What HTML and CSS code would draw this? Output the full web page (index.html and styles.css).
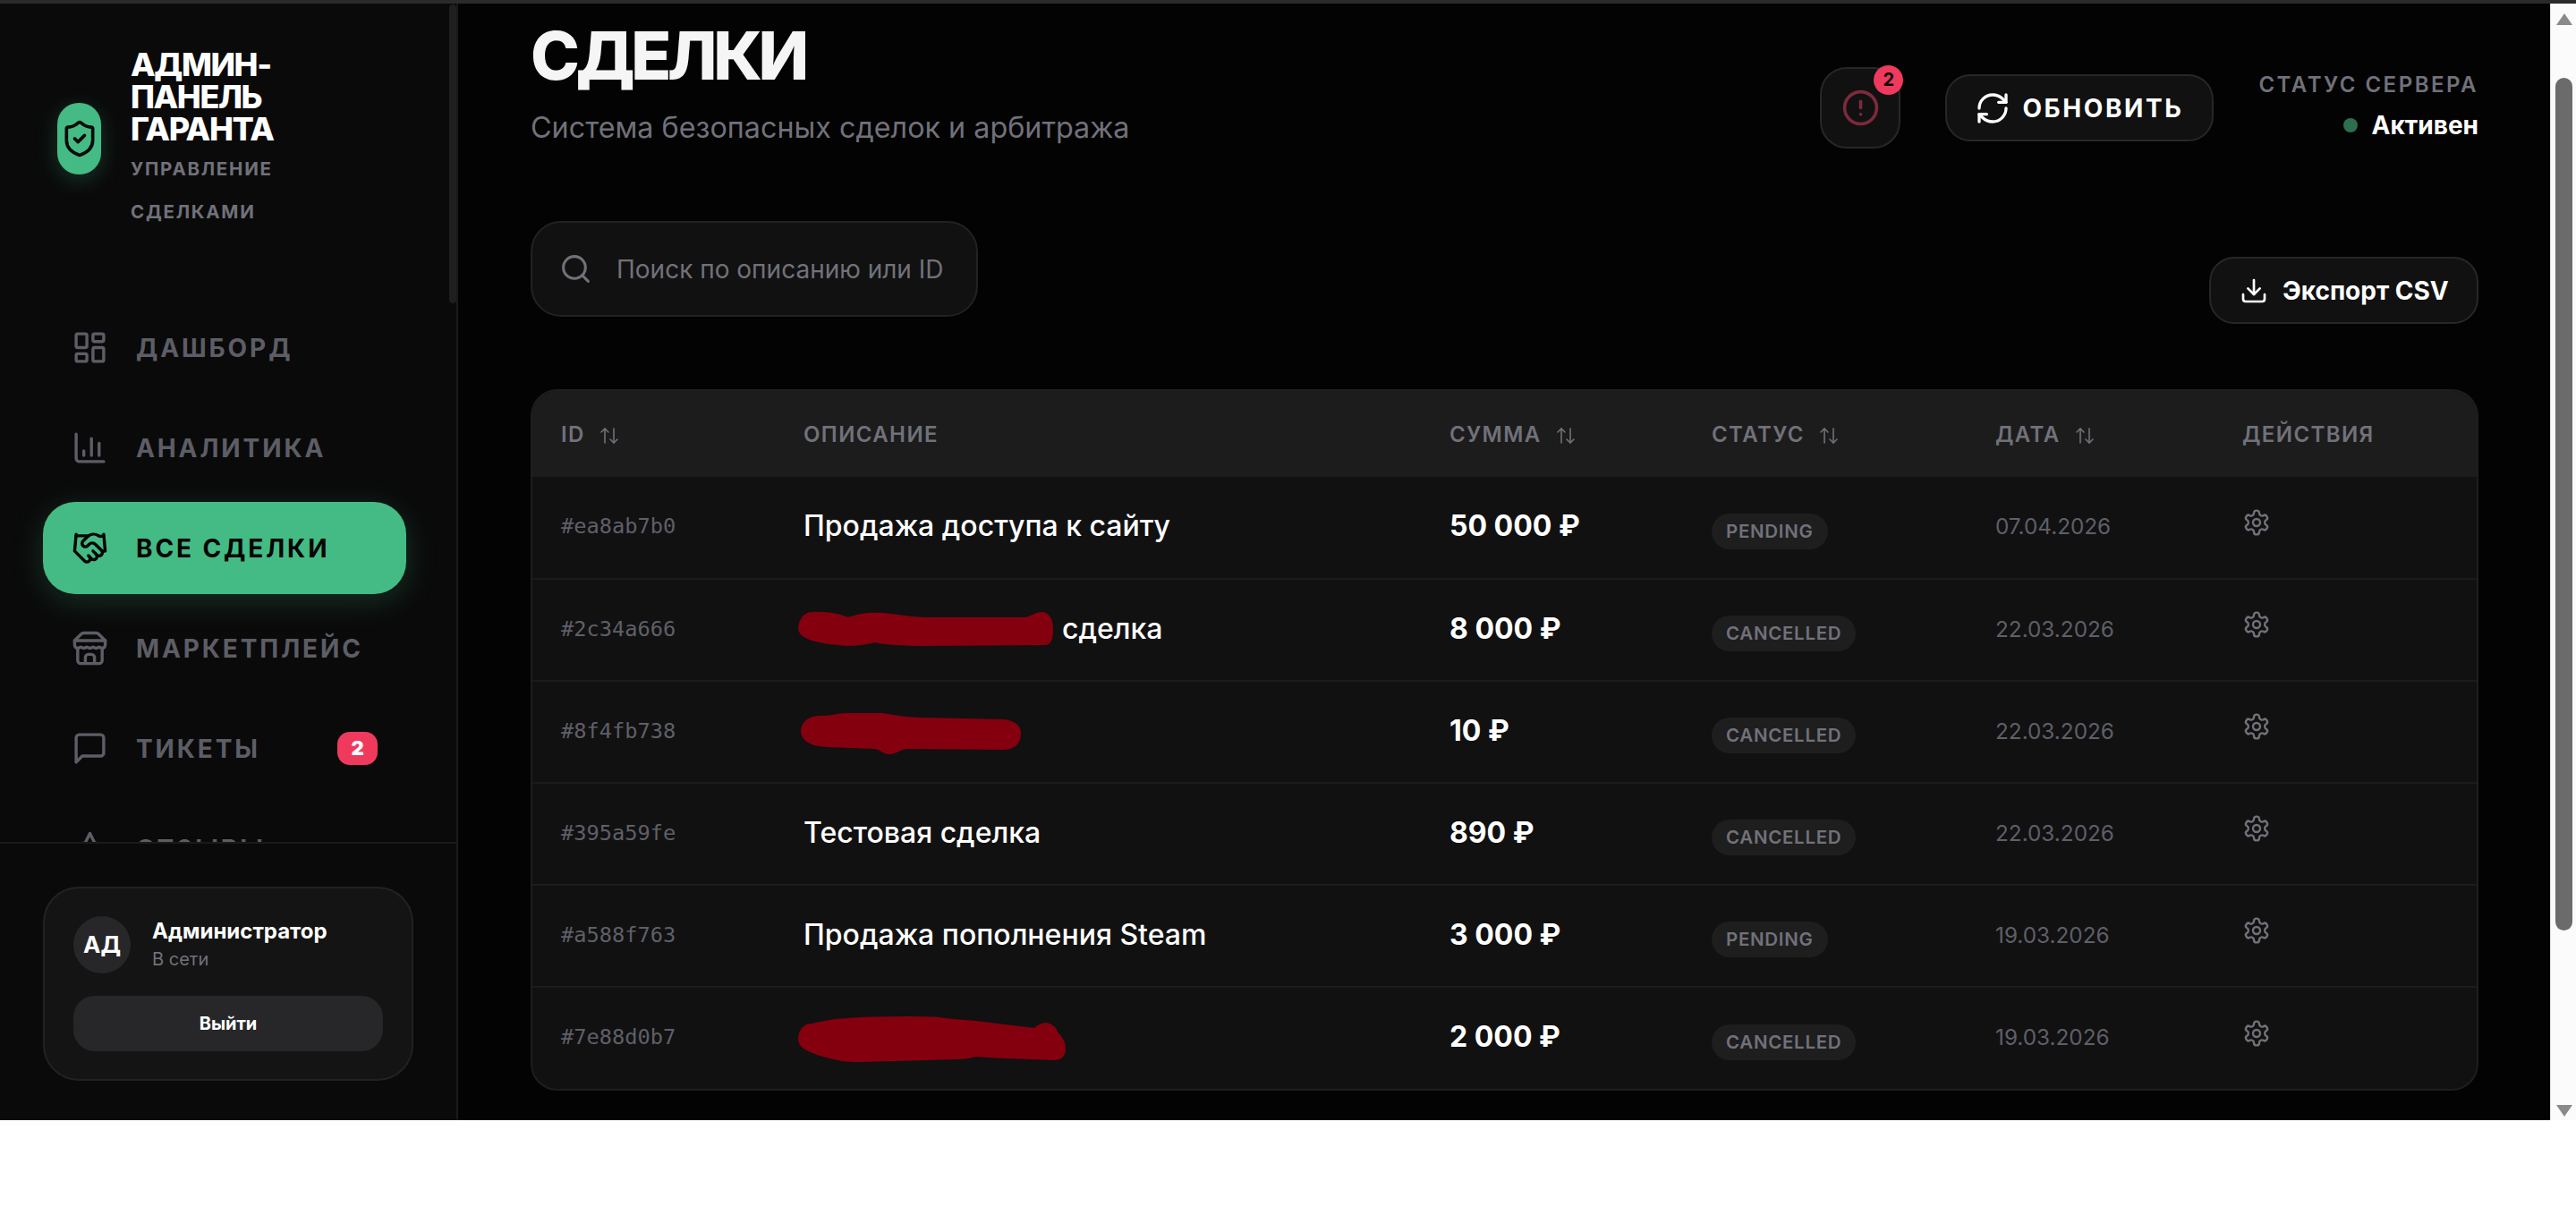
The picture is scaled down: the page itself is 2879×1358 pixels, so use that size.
FILE: index.html
```html
<!DOCTYPE html>
<html lang="ru">
<head>
  <meta charset="UTF-8">
  <title>Админ-панель гаранта</title>
  <link rel="stylesheet" href="styles.css">
</head>
<body>
  <svg class="defs" width="0" height="0">
    <symbol id="i-sort" viewBox="0 0 24 24"><path d="m21 16-4 4-4-4"/><path d="M17 20V4"/><path d="m3 8 4-4 4 4"/><path d="M7 4v16"/></symbol>
    <symbol id="i-gear" viewBox="0 0 24 24"><path d="M12.22 2h-.44a2 2 0 0 0-2 2v.18a2 2 0 0 1-1 1.73l-.43.25a2 2 0 0 1-2 0l-.15-.08a2 2 0 0 0-2.73.73l-.22.38a2 2 0 0 0 .73 2.73l.15.1a2 2 0 0 1 1 1.72v.51a2 2 0 0 1-1 1.74l-.15.09a2 2 0 0 0-.73 2.73l.22.38a2 2 0 0 0 2.73.73l.15-.08a2 2 0 0 1 2 0l.43.25a2 2 0 0 1 1 1.73V20a2 2 0 0 0 2 2h.44a2 2 0 0 0 2-2v-.18a2 2 0 0 1 1-1.73l.43-.25a2 2 0 0 1 2 0l.15.08a2 2 0 0 0 2.73-.73l.22-.39a2 2 0 0 0-.73-2.73l-.15-.08a2 2 0 0 1-1-1.74v-.5a2 2 0 0 1 1-1.74l.15-.09a2 2 0 0 0 .73-2.73l-.22-.38a2 2 0 0 0-2.73-.73l-.15.08a2 2 0 0 1-2 0l-.43-.25a2 2 0 0 1-1-1.73V4a2 2 0 0 0-2-2z"/><circle cx="12" cy="12" r="3"/></symbol>
  </svg>

  <div class="top-strip"></div>
  <div class="window">
    <aside class="sidebar">
      <div class="side-thumb"></div>
      <div class="brand">
        <div class="brand-icon">
          <svg class="icon" viewBox="0 0 24 24"><path d="M20 13c0 5-3.5 7.5-7.66 8.95a1 1 0 0 1-.67-.01C7.5 20.5 4 18 4 13V6a1 1 0 0 1 1-1c2 0 4.5-1.2 6.24-2.72a1.17 1.17 0 0 1 1.52 0C14.51 3.81 17 5 19 5a1 1 0 0 1 1 1z"/><path d="m9 12 2 2 4-4"/></svg>
        </div>
        <div class="brand-text">
          <div class="brand-title">АДМИН-ПАНЕЛЬ ГАРАНТА</div>
          <div class="brand-sub">УПРАВЛЕНИЕ СДЕЛКАМИ</div>
        </div>
      </div>

      <nav class="nav">
        <a class="nav-item">
          <svg class="icon" viewBox="0 0 24 24"><rect x="3" y="3" width="7" height="9" rx="1"/><rect x="14" y="3" width="7" height="5" rx="1"/><rect x="14" y="12" width="7" height="9" rx="1"/><rect x="3" y="16" width="7" height="5" rx="1"/></svg>
          <span>ДАШБОРД</span>
        </a>
        <a class="nav-item">
          <svg class="icon" viewBox="0 0 24 24"><path d="M3 3v16a2 2 0 0 0 2 2h16"/><path d="M18 17V9"/><path d="M13 17V6"/><path d="M8 17v-3"/></svg>
          <span>АНАЛИТИКА</span>
        </a>
        <a class="nav-item active">
          <svg class="icon" viewBox="0 0 24 24"><path d="m11 17 2 2a1 1 0 1 0 3-3"/><path d="m14 14 2.5 2.5a1 1 0 1 0 3-3l-3.88-3.88a3 3 0 0 0-4.24 0l-.88.88a1 1 0 1 1-3-3l2.81-2.81a5.79 5.79 0 0 1 7.06-.87l.47.28a2 2 0 0 0 1.42.25L21 4"/><path d="m21 3 1 11h-2"/><path d="M3 3 2 14l6.5 6.5a1 1 0 1 0 3-3"/><path d="M3 4h8"/></svg>
          <span>ВСЕ СДЕЛКИ</span>
        </a>
        <a class="nav-item">
          <svg class="icon" viewBox="0 0 24 24"><path d="m2 7 4.41-4.41A2 2 0 0 1 7.83 2h8.34a2 2 0 0 1 1.42.59L22 7"/><path d="M4 12v8a2 2 0 0 0 2 2h12a2 2 0 0 0 2-2v-8"/><path d="M15 22v-4a2 2 0 0 0-2-2h-2a2 2 0 0 0-2 2v4"/><path d="M2 7h20"/><path d="M22 7v3a2 2 0 0 1-2 2a2.7 2.7 0 0 1-1.59-.63.7.7 0 0 0-.82 0A2.7 2.7 0 0 1 16 12a2.7 2.7 0 0 1-1.59-.63.7.7 0 0 0-.82 0A2.7 2.7 0 0 1 12 12a2.7 2.7 0 0 1-1.59-.63.7.7 0 0 0-.82 0A2.7 2.7 0 0 1 8 12a2.7 2.7 0 0 1-1.59-.63.7.7 0 0 0-.82 0A2.7 2.7 0 0 1 4 12a2 2 0 0 1-2-2V7"/></svg>
          <span>МАРКЕТПЛЕЙС</span>
        </a>
        <a class="nav-item">
          <svg class="icon" viewBox="0 0 24 24"><path d="M21 15a2 2 0 0 1-2 2H7l-4 4V5a2 2 0 0 1 2-2h14a2 2 0 0 1 2 2z"/></svg>
          <span>ТИКЕТЫ</span>
          <b class="nav-badge">2</b>
        </a>
        <a class="nav-item">
          <svg class="icon" viewBox="0 0 24 24"><polygon points="12 2 15.09 8.26 22 9.27 17 14.14 18.18 21.02 12 17.77 5.82 21.02 7 14.14 2 9.27 8.91 8.26 12 2"/></svg>
          <span>ОТЗЫВЫ</span>
        </a>
      </nav>

      <div class="side-footer">
        <div class="user-card">
          <div class="user-row">
            <div class="avatar">АД</div>
            <div>
              <div class="user-name">Администратор</div>
              <div class="user-state">В сети</div>
            </div>
          </div>
          <button class="logout">Выйти</button>
        </div>
      </div>
    </aside>

    <main class="main">
      <header class="page-head">
        <div>
          <h1 class="page-title">СДЕЛКИ</h1>
          <p class="page-sub">Система безопасных сделок и арбитража</p>
        </div>
        <div class="head-actions">
          <button class="alert-btn">
            <svg class="icon" viewBox="0 0 24 24"><circle cx="12" cy="12" r="10"/><line x1="12" y1="8" x2="12" y2="12"/><line x1="12" y1="16" x2="12.01" y2="16"/></svg>
            <b class="alert-count">2</b>
          </button>
          <button class="btn btn-refresh">
            <svg class="icon" viewBox="0 0 24 24"><path d="M3 12a9 9 0 0 1 9-9 9.75 9.75 0 0 1 6.74 2.74L21 8"/><path d="M21 3v5h-5"/><path d="M21 12a9 9 0 0 1-9 9 9.75 9.75 0 0 1-6.74-2.74L3 16"/><path d="M8 16H3v5"/></svg>
            ОБНОВИТЬ
          </button>
          <div class="server">
            <div class="server-label">СТАТУС СЕРВЕРА</div>
            <div class="server-state"><i class="dot"></i>Активен</div>
          </div>
        </div>
      </header>

      <div class="toolbar">
        <label class="search">
          <svg class="icon" viewBox="0 0 24 24"><circle cx="11" cy="11" r="8"/><path d="m21 21-4.3-4.3"/></svg>
          <span>Поиск по описанию или ID</span>
        </label>
        <button class="btn btn-export">
          <svg class="icon" viewBox="0 0 24 24"><path d="M21 15v4a2 2 0 0 1-2 2H5a2 2 0 0 1-2-2v-4"/><polyline points="7 10 12 15 17 10"/><line x1="12" y1="15" x2="12" y2="3"/></svg>
          Экспорт CSV
        </button>
      </div>

      <div class="table-wrap">
        <table class="deals">
          <colgroup>
            <col class="c-id"><col class="c-desc"><col class="c-sum"><col class="c-status"><col class="c-date"><col class="c-act">
          </colgroup>
          <thead>
            <tr>
              <th>ID <svg class="icon sort"><use href="#i-sort"/></svg></th>
              <th>ОПИСАНИЕ</th>
              <th>СУММА <svg class="icon sort"><use href="#i-sort"/></svg></th>
              <th>СТАТУС <svg class="icon sort"><use href="#i-sort"/></svg></th>
              <th>ДАТА <svg class="icon sort"><use href="#i-sort"/></svg></th>
              <th>ДЕЙСТВИЯ</th>
            </tr>
          </thead>
          <tbody>
            <tr>
              <td class="id">#ea8ab7b0</td>
              <td class="desc">Продажа доступа к сайту</td>
              <td class="sum">50 000 ₽</td>
              <td class="st"><span class="badge">PENDING</span></td>
              <td class="date">07.04.2026</td>
              <td class="act"><svg class="icon gear"><use href="#i-gear"/></svg></td>
            </tr>
            <tr>
              <td class="id">#2c34a666</td>
              <td class="desc"><span class="with-blot">
                <svg class="blot blot-a" viewBox="0 0 287 39"><path d="M2 20 C 3 8 9 2 17 2 C 30 1 44 3 57 8 C 68 4 80 2 95 3 C 115 5 130 8 150 8 L 255 8 C 262 7 266 2 273 2 C 281 2 285 10 285 20 C 285 30 283 37 277 37 L 143 38 C 120 38 100 37 87 34 C 74 37 58 39 46 37 C 30 36 4 32 2 20 Z"/></svg>
                <span>сделка</span></span></td>
              <td class="sum">8 000 ₽</td>
              <td class="st"><span class="badge">CANCELLED</span></td>
              <td class="date">22.03.2026</td>
              <td class="act"><svg class="icon gear"><use href="#i-gear"/></svg></td>
            </tr>
            <tr>
              <td class="id">#8f4fb738</td>
              <td class="desc">
                <svg class="blot blot-b" viewBox="0 0 248 46"><path d="M2 19 C 3 9 12 4 23 4 C 34 4 44 1 54 1 L 92 1 C 105 3 120 6 135 6 L 227 8 C 240 9 246 15 246 23 C 246 33 240 40 227 40 L 120 39 C 112 39 108 45 100 45 C 92 45 90 39 84 39 L 30 37 C 12 36 2 30 2 19 Z"/></svg>
              </td>
              <td class="sum">10 ₽</td>
              <td class="st"><span class="badge">CANCELLED</span></td>
              <td class="date">22.03.2026</td>
              <td class="act"><svg class="icon gear"><use href="#i-gear"/></svg></td>
            </tr>
            <tr>
              <td class="id">#395a59fe</td>
              <td class="desc">Тестовая сделка</td>
              <td class="sum">890 ₽</td>
              <td class="st"><span class="badge">CANCELLED</span></td>
              <td class="date">22.03.2026</td>
              <td class="act"><svg class="icon gear"><use href="#i-gear"/></svg></td>
            </tr>
            <tr>
              <td class="id">#a588f763</td>
              <td class="desc">Продажа пополнения Steam</td>
              <td class="sum">3 000 ₽</td>
              <td class="st"><span class="badge">PENDING</span></td>
              <td class="date">19.03.2026</td>
              <td class="act"><svg class="icon gear"><use href="#i-gear"/></svg></td>
            </tr>
            <tr>
              <td class="id">#7e88d0b7</td>
              <td class="desc">
                <svg class="blot blot-c" viewBox="0 0 301 51"><path d="M2 25 C 3 14 8 9 17 9 C 30 6 44 3 56 3 C 80 1 105 1 122 1 C 135 1 150 1 158 2 C 172 4 186 5 199 6 L 265 14 C 270 10 274 8 278 8 C 285 9 289 14 291 19 C 296 24 299 30 299 36 C 299 44 295 48 286 48 C 258 47 228 46 199 44 C 193 46 186 47 179 47 L 71 50 C 60 50 52 50 46 48 C 36 46 26 44 15 39 C 7 36 2 32 2 25 Z"/></svg>
              </td>
              <td class="sum">2 000 ₽</td>
              <td class="st"><span class="badge">CANCELLED</span></td>
              <td class="date">19.03.2026</td>
              <td class="act"><svg class="icon gear"><use href="#i-gear"/></svg></td>
            </tr>
          </tbody>
        </table>
      </div>
    </main>

    <div class="page-scroll">
      <i class="arrow up"></i>
      <div class="page-thumb"></div>
      <i class="arrow down"></i>
    </div>
  </div>
</body>
</html>
```

FILE: styles.css
```css
/* Base */
* {
  box-sizing: border-box;
}

body {
  margin: 0;
  background: #fff;
  color: #fff;
  font-family: Inter, "Noto Sans", sans-serif;
  overflow: hidden;
}

button {
  font-family: inherit;
  cursor: pointer;
}

.defs {
  position: absolute;
}

.icon {
  display: block;
  fill: none;
  stroke: currentColor;
  stroke-width: 2;
  stroke-linecap: round;
  stroke-linejoin: round;
  flex: none;
}

.top-strip {
  height: 4px;
  background: #2a2a2a;
}

.window {
  display: flex;
  height: 1248px;
}

/* Sidebar */
.sidebar {
  position: relative;
  width: 512px;
  flex: none;
  display: flex;
  flex-direction: column;
  background: #0a0a0a;
  border-right: 2px solid #1a1a1a;
}

.side-thumb {
  position: absolute;
  top: 1px;
  right: 0;
  width: 8px;
  height: 334px;
  border-radius: 4px;
  background: #1f1f1f;
}

.brand {
  display: flex;
  align-items: flex-start;
  gap: 33px;
  padding: 50px 0 0 64px;
  height: 333px;
  flex: none;
}

.brand-icon {
  width: 49px;
  height: 80px;
  margin-top: 61px;
  flex: none;
  display: flex;
  align-items: center;
  justify-content: center;
  border-radius: 24px;
  background: #44bb84;
  color: #0a0a0a;
  box-shadow: 0 6px 24px rgba(68, 187, 132, 0.25);
}

.brand-icon .icon {
  width: 44px;
  height: 44px;
}

.brand-text {
  width: 200px;
}

.brand-title {
  font-size: 36px;
  line-height: 36px;
  font-weight: 800;
  letter-spacing: -1.4px;
}

.brand-sub {
  margin-top: 3px;
  font-size: 20.5px;
  line-height: 48px;
  font-weight: 700;
  letter-spacing: 1.75px;
  color: #71717a;
}

.nav {
  flex: 1;
  min-height: 0;
  overflow: hidden;
  display: flex;
  flex-direction: column;
  gap: 9px;
  padding: 0 56px 0 48px;
}

.nav-item {
  height: 103px;
  flex: none;
  display: flex;
  align-items: center;
  gap: 31px;
  padding: 0 32px;
  border-radius: 36px;
  font-size: 28px;
  font-weight: 700;
  letter-spacing: 2.9px;
  color: #5d5d66;
}

.nav-item .icon {
  width: 41px;
  height: 41px;
}

.nav-item.active {
  background: #44bb84;
  color: #050505;
  box-shadow: 0 8px 34px rgba(68, 187, 132, 0.22);
}

.nav-badge {
  margin-left: auto;
  width: 45px;
  height: 37px;
  border-radius: 14px;
  background: #ef3a5d;
  color: #fff;
  font-size: 22px;
  line-height: 37px;
  letter-spacing: 0;
  text-align: center;
}

.side-footer {
  height: 311px;
  flex: none;
  padding: 48px 0 0 48px;
  border-top: 2px solid #1a1a1a;
  background: #0a0a0a;
}

.user-card {
  width: 414px;
  height: 217px;
  padding: 31px 32px;
  border: 2px solid #222;
  border-radius: 40px;
  background: #141414;
}

.user-row {
  display: flex;
  align-items: center;
  gap: 24px;
}

.avatar {
  width: 64px;
  height: 64px;
  border-radius: 50%;
  background: #27272a;
  font-size: 26px;
  font-weight: 700;
  line-height: 64px;
  text-align: center;
}

.user-name {
  font-size: 24px;
  line-height: 32px;
  font-weight: 700;
}

.user-state {
  font-size: 20px;
  line-height: 30px;
  color: #71717a;
}

.logout {
  display: block;
  width: 346px;
  height: 62px;
  margin-top: 25px;
  border: 0;
  border-radius: 24px;
  background: #27272a;
  color: #fff;
  font-size: 20px;
  font-weight: 700;
}

/* Main */
.main {
  flex: 1;
  min-width: 0;
  padding: 0 80px 0 81px;
  background: #030303;
  overflow: hidden;
}

.page-head {
  display: flex;
  justify-content: space-between;
  align-items: flex-start;
}

.page-title {
  margin: 14px 0 0;
  font-size: 74px;
  line-height: 88px;
  font-weight: 800;
  letter-spacing: -4.3px;
  color: #f5f5f5;
}

.page-sub {
  margin: 15px 0 0;
  font-size: 32.3px;
  line-height: 44px;
  color: #71717a;
}

.head-actions {
  display: flex;
  align-items: center;
  gap: 50px;
  margin-top: 71px;
}

.alert-btn {
  position: relative;
  width: 90px;
  height: 91px;
  display: flex;
  align-items: center;
  justify-content: center;
  border: 2px solid #27272a;
  border-radius: 30px;
  background: #111;
  color: #7d2a3c;
}

.alert-btn .icon {
  width: 43px;
  height: 43px;
}

.alert-count {
  position: absolute;
  top: -4px;
  right: -5px;
  width: 33px;
  height: 33px;
  border-radius: 50%;
  background: #ef3a5d;
  color: #0a0a0a;
  font-size: 20px;
  line-height: 33px;
  text-align: center;
}

.btn {
  height: 75px;
  display: flex;
  align-items: center;
  border: 2px solid #27272a;
  border-radius: 28px;
  background: #111;
  color: #fff;
  font-weight: 700;
}

.btn-refresh {
  width: 300px;
  gap: 13px;
  padding: 0 0 0 31px;
  font-size: 28px;
  letter-spacing: 2.6px;
}

.btn-refresh .icon {
  width: 40px;
  height: 40px;
}

.server {
  margin-bottom: 4px;
  text-align: right;
}

.server-label {
  font-size: 24px;
  line-height: 30px;
  font-weight: 600;
  letter-spacing: 2.5px;
  color: #71717a;
}

.server-state {
  margin-top: 13px;
  display: flex;
  align-items: center;
  justify-content: flex-end;
  gap: 16px;
  font-size: 28px;
  line-height: 34px;
  font-weight: 700;
}

.dot {
  width: 16px;
  height: 16px;
  border-radius: 50%;
  background: #2e6e50;
}

.toolbar {
  display: flex;
  justify-content: space-between;
  align-items: flex-end;
  margin-top: 81px;
}

.search {
  width: 500px;
  height: 107px;
  margin-bottom: 8px;
  display: flex;
  align-items: center;
  gap: 27px;
  padding-left: 30px;
  border: 2px solid #222;
  border-radius: 34px;
  background: #111;
  color: #71717a;
  font-size: 28px;
}

.search .icon {
  width: 37px;
  height: 37px;
}

.btn-export {
  width: 301px;
  gap: 16px;
  padding: 0 0 0 32px;
  font-size: 28px;
}

.btn-export .icon {
  width: 32px;
  height: 32px;
}

/* Table */
.table-wrap {
  margin-top: 73px;
  border: 2px solid #1e1e1e;
  border-radius: 30px;
  background: #111;
  overflow: hidden;
}

.deals {
  width: 100%;
  table-layout: fixed;
  border-collapse: collapse;
}

.c-id { width: 271px; }
.c-desc { width: 722px; }
.c-sum { width: 293px; }
.c-status { width: 317px; }
.c-date { width: 276px; }

.deals th {
  height: 96px;
  padding: 0 0 0 32px;
  background: #1c1c1c;
  color: #71717a;
  font-size: 24px;
  font-weight: 600;
  letter-spacing: 1.4px;
  text-align: left;
  white-space: nowrap;
}

.sort {
  display: inline-block;
  width: 24px;
  height: 24px;
  margin-left: 8px;
  vertical-align: -5px;
  stroke-width: 1.6;
}

.deals td {
  height: 114px;
  padding: 0 0 0 32px;
  border-bottom: 2px solid #1c1c1c;
  white-space: nowrap;
}

.deals tr:last-child td {
  border-bottom: 0;
}

.deals .id {
  padding-bottom: 3px;
  font-family: "DejaVu Sans Mono", monospace;
  font-size: 23.7px;
  color: #5f5f68;
}

.deals .desc {
  padding-bottom: 4px;
  font-size: 32px;
  font-weight: 500;
}

.with-blot {
  display: flex;
  align-items: center;
  gap: 9px;
}

.blot {
  display: block;
  margin-left: -7px;
  fill: #85000f;
  stroke: #85000f;
  stroke-width: 2;
  overflow: visible;
}

.blot-a {
  width: 287px;
  height: 39px;
}

.blot-b {
  width: 248px;
  height: 46px;
  margin-left: -4px;
  margin-top: 8px;
}

.blot-c {
  width: 301px;
  height: 51px;
  margin-top: 6px;
}

.deals .sum {
  padding-bottom: 4px;
  font-size: 32px;
  font-weight: 700;
}

.deals .st {
  padding-top: 8px;
}

.badge {
  display: inline-block;
  height: 40px;
  padding: 0 16px;
  border-radius: 20px;
  background: #1e1e1e;
  color: #71717a;
  font-size: 20.5px;
  font-weight: 600;
  line-height: 40px;
  letter-spacing: 0.7px;
}

.deals .date {
  padding-bottom: 3px;
  font-size: 24.3px;
  color: #5f5f68;
}

.gear {
  width: 32px;
  height: 32px;
  margin-bottom: 12px;
  color: #71717a;
  stroke-width: 1.8;
}

/* Browser scrollbar on the right */
.page-scroll {
  width: 29px;
  flex: none;
  display: flex;
  flex-direction: column;
  align-items: center;
  padding: 11px 0 4px 1px;
  border-left: 1px solid #e4e4e4;
  background: #fbfbfb;
}

.page-thumb {
  width: 19px;
  height: 953px;
  margin-top: 59px;
  border-radius: 10px;
  background: #6b6b6b;
}

.arrow {
  width: 0;
  height: 0;
  border-left: 9px solid transparent;
  border-right: 9px solid transparent;
}

.arrow.up {
  border-bottom: 13px solid #8a8a8a;
}

.arrow.down {
  margin-top: auto;
  border-top: 13px solid #8a8a8a;
}
```
